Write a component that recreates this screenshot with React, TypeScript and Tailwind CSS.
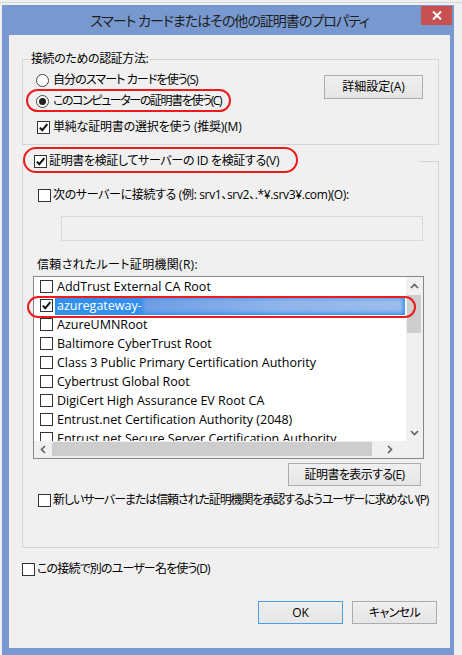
import React from "react";

const JP = "font-['Open_Sans','Noto_Sans_CJK_JP',sans-serif] [font-feature-settings:'palt']";

const ROOTS = [
  "AddTrust External CA Root",
  "azuregateway-",
  "AzureUMNRoot",
  "Baltimore CyberTrust Root",
  "Class 3 Public Primary Certification Authority",
  "Cybertrust Global Root",
  "DigiCert High Assurance EV Root CA",
  "Entrust.net Certification Authority (2048)",
  "Entrust.net Secure Server Certification Authority",
];

function Check({ checked = false }: { checked?: boolean }) {
  return (
    <span className="flex h-[13px] w-[13px] shrink-0 items-center justify-center border border-[#333] bg-white">
      {checked && (
        <svg width="11" height="11" viewBox="0 0 11 11">
          <path d="M1.8 5.6 L4.3 8.2 L9.3 2.2" stroke="#111" strokeWidth="2" fill="none" />
        </svg>
      )}
    </span>
  );
}

function Radio({ checked = false }: { checked?: boolean }) {
  return (
    <span className="flex h-[13px] w-[13px] shrink-0 items-center justify-center rounded-full border border-[#444] bg-white">
      {checked && <span className="h-[7px] w-[7px] rounded-full bg-[#222]" />}
    </span>
  );
}

function Btn({ label, className = "", primary = false }: { label: string; className?: string; primary?: boolean }) {
  return (
    <div
      className={`flex items-center justify-center whitespace-nowrap border bg-linear-to-b from-[#f0f0f0] to-[#e5e5e5] ${
        primary ? "border-[#4a9fe8]" : "border-[#acacac]"
      } ${className}`}
    >
      {label}
    </div>
  );
}

function Chevron({ dir }: { dir: "up" | "down" | "left" | "right" }) {
  const d =
    dir === "up" ? "M1 6 L4.5 2.5 L8 6"
    : dir === "down" ? "M1 3 L4.5 6.5 L8 3"
    : dir === "left" ? "M6 1 L2.5 4.5 L6 8"
    : "M3 1 L6.5 4.5 L3 8";
  return (
    <svg width="9" height="9" viewBox="0 0 9 9">
      <path d={d} stroke="#606060" strokeWidth="1.6" fill="none" />
    </svg>
  );
}

export default function App() {
  return (
    <div className={`h-[655px] w-[462px] overflow-hidden bg-[#f0f0f0] text-[12px] leading-[16px] text-black ${JP}`}>
      {/* page behind the dialog */}
      <div className="h-[5px] pt-[2px]">
        <div className="h-px bg-[#d6d6d6]" />
      </div>

      {/* window frame */}
      <div className="relative ml-[2px] flex h-[650px] w-[452px] flex-col bg-[#7799cf] pl-[7px] pr-[4px]">
        <div className="flex h-[30px] items-center justify-center whitespace-nowrap pt-[1px] text-[14px] tracking-[-1px] text-[#1e1e1e]">
          スマート カードまたはその他の証明書のプロパティ
        </div>
        <div className="absolute right-[2px] top-[1px] flex h-[19px] w-[31px] items-center justify-center bg-[#c75050]">
          <svg width="10" height="9" viewBox="0 0 10 9">
            <path d="M1 0.5 L9 8.5 M9 0.5 L1 8.5" stroke="#fff" strokeWidth="2" />
          </svg>
        </div>

        {/* client area */}
        <div className="flex h-[613px] flex-col whitespace-nowrap bg-[#f0f0f0]">
          {/* group 1 */}
          <fieldset className="ml-[13px] mt-[16px] h-[94px] w-[417px] border border-[#d5d5d5]">
            <legend className="ml-[7px] px-[1px] leading-[16px] tracking-[-0.4px]">接続のための認証方法:</legend>
            <div className="flex justify-between pl-[13px] pr-[15px]">
              <div className="mt-[3px] flex flex-col">
                <div className="flex h-[20px] items-center gap-[4px]">
                  <Radio />
                  <span className="tracking-[-0.9px]">自分のスマート カードを使う(S)</span>
                </div>
                <div className="relative mt-[1px] flex h-[20px] items-center gap-[4px]">
                  <Radio checked />
                  <span className="tracking-[-1.4px]">このコンピューターの証明書を使う(C)</span>
                  <div className="absolute left-[-10px] top-[-2px] h-[23px] w-[205px] rounded-full border-2 border-[#ec1c1c]" />
                </div>
                <div className="ml-[1px] mt-[6px] flex h-[20px] items-center gap-[3px]">
                  <Check checked />
                  <span className="tracking-[-0.2px]">単純な証明書の選択を使う (推奨)(M)</span>
                </div>
              </div>
              <Btn label="詳細設定(A)" className="mt-[8px] h-[24px] w-[99px]" />
            </div>
          </fieldset>

          {/* group 2 */}
          <fieldset className="ml-[13px] mt-[6px] h-[397px] w-[417px] border border-[#d5d5d5]">
            <legend className="w-[396px]">
              <div className="relative flex h-[20px] items-center gap-[2px] bg-[#f0f0f0] pl-[11px]">
                <Check checked />
                <span className="tracking-[-0.35px]">証明書を検証してサーバーの ID を検証する(V)</span>
                <div className="absolute left-0 top-[-4px] h-[26px] w-[275px] rounded-full border-2 border-[#ec1c1c]" />
              </div>
            </legend>

            <div className="mt-[14px] flex h-[20px] items-center gap-[2px] pl-[15px]">
              <Check />
              <span className="tracking-[-0.35px]">次のサーバーに接続する (例: srv1、srv2、.*¥.srv3¥.com)(O):</span>
            </div>
            <div className="ml-[38px] mt-[11px] h-[25px] w-[362px] border border-[#d9d9d9] bg-[#f0f0f0]" />
            <div className="mt-[14px] flex h-[20px] items-center pl-[14px] tracking-[0.3px]">信頼されたルート証明機関(R):</div>

            {/* list box */}
            <div className="relative ml-[10px] mt-[1px] flex h-[183px] w-[391px] flex-col border border-[#828790] bg-white text-[12.5px]">
              <div className="flex h-[164px]">
                <div className="flex flex-1 flex-col overflow-hidden">
                  {ROOTS.map((name, i) => (
                    <div key={name} className="flex h-[19px] shrink-0 items-center">
                      <span className="ml-[6px]">
                        <Check checked={i === 1} />
                      </span>
                      {i === 1 ? (
                        <div className="ml-[2px] mr-[1px] flex h-[19px] flex-1 items-center overflow-hidden bg-[#3390ea] px-[2px] text-white">
                          <span>{name}</span>
                          <div className="ml-[1px] h-[15px] flex-1 bg-linear-to-r from-[#6d9de6] via-[#8fb3ec] to-[#9ebdee] blur-[2px]" />
                        </div>
                      ) : (
                        <span className="ml-[2px] px-[2px]">{name}</span>
                      )}
                    </div>
                  ))}
                </div>
                <div className="flex w-[17px] flex-col bg-[#f0f0f0]">
                  <div className="flex h-[17px] items-center justify-center pt-[2px]">
                    <Chevron dir="up" />
                  </div>
                  <div className="ml-[1px] mt-[1px] h-[38px] w-[14px] bg-[#cdcdcd]" />
                  <div className="flex-1" />
                  <div className="flex h-[17px] items-center justify-center">
                    <Chevron dir="down" />
                  </div>
                </div>
              </div>
              <div className="flex h-[17px] bg-[#f0f0f0]">
                <div className="flex w-[18px] items-center justify-center">
                  <Chevron dir="left" />
                </div>
                <div className="mt-[1px] h-[14px] w-[320px] bg-[#cdcdcd]" />
                <div className="flex flex-1 items-center justify-center">
                  <Chevron dir="right" />
                </div>
                <div className="w-[17px]" />
              </div>
              <div className="absolute left-[-7px] top-[19px] h-[22px] w-[389px] rounded-full border-2 border-[#ec1c1c]" />
            </div>

            <Btn label="証明書を表示する(E)" className="ml-[265px] mt-[4px] h-[23px] w-[133px] tracking-[-0.6px]" />
            <div className="mt-[4px] flex h-[20px] items-center gap-[2px] pl-[15px]">
              <Check />
              <span className="tracking-[-1.1px]">新しいサーバーまたは信頼された証明機関を承認するようユーザーに求めない(P)</span>
            </div>
          </fieldset>

          <div className="ml-[13px] mt-[11px] flex h-[20px] items-center gap-[2px]">
            <Check />
            <span className="tracking-[-0.85px]">この接続で別のユーザー名を使う(D)</span>
          </div>

          <div className="mt-[22px] flex justify-end gap-[9px] pr-[13px]">
            <Btn label="OK" primary className="h-[23px] w-[85px]" />
            <Btn label="キャンセル" className="h-[23px] w-[85px] tracking-[-0.6px]" />
          </div>
        </div>
      </div>
    </div>
  );
}
